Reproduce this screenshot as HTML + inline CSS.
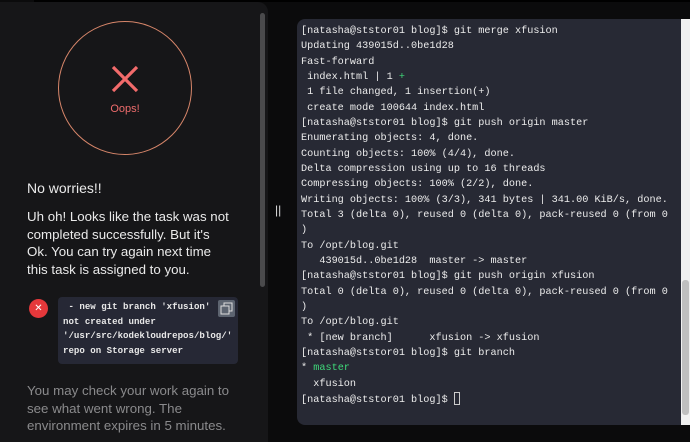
<!DOCTYPE html>
<html><head><meta charset="utf-8"><style>
*{margin:0;padding:0;box-sizing:border-box}
body{width:690px;height:434px;background:#0b0b0c;position:relative;overflow:hidden;font-family:"Liberation Sans",sans-serif}
#left{position:absolute;left:0;top:2px;width:268px;height:440px;background:#161618;border-radius:0 10px 0 0}
#topbar{position:absolute;left:34px;top:0;width:656px;height:2px;background:#000}
#sb{position:absolute;left:260px;top:13px;width:5px;height:274px;background:#4a4a4c;border-radius:3px}
#circle{position:absolute;left:58px;top:21px;width:134px;height:134px;border-radius:50%;border:1.3px solid #d7866a}
#oops{position:absolute;left:0;width:250px;text-align:center;top:103px;color:#ee6c6c;font-size:11px}
.t{position:absolute;left:27px;color:#eaeaea}
#nw{top:180px;font-size:14px}
#p1{top:208px;font-size:13.3px;line-height:17.7px;width:205px}
#p2{top:382px;font-size:13.3px;line-height:17.7px;color:#8a8a8c;width:212px}
#rc{position:absolute;left:29px;top:299px;width:19px;height:19px;border-radius:50%;background:#e5383b;color:#fff;font-size:10px;text-align:center;line-height:19px}
#code{position:absolute;left:58px;top:297px;width:180px;height:67px;background:#262835;border-radius:4px;color:#e8e8e8;font:bold 9.1px/14.5px "Liberation Mono",monospace;padding:3px 0 0 5px;white-space:pre}
#copy{position:absolute;left:218px;top:300px;width:17px;height:17px;background:#5d6470;border-radius:2px}
#div{position:absolute;left:275px;top:203px;color:#ddd;font-size:12px}
#term{position:absolute;left:297px;top:19px;width:400px;height:406px;background:#272934;border-radius:8px}
#tt{position:absolute;left:301px;top:24px;color:#ececec;font:10.2px/15.33px "Liberation Mono",monospace;white-space:pre}
.g{color:#3fd97a}
#tsb{position:absolute;left:681px;top:19px;width:9px;height:406px;background:#f0f0f0}
#th{position:absolute;left:682px;top:280px;width:7px;height:135px;background:#bfbfbf;border-radius:3px}
#cur{display:inline-block;width:6px;height:13px;border:1px solid #ccc;vertical-align:-3px}
</style></head><body>
<div id="topbar"></div>
<div id="left"></div>
<div id="sb"></div>
<div id="circle"></div>
<svg style="left:111px;top:65px;position:absolute" width="28" height="28"><path d="M2 2L26 26M26 2L2 26" stroke="#f26b6b" stroke-width="3.2"/></svg>
<div id="oops">Oops!</div>
<div class="t" id="nw">No worries!!</div>
<div class="t" id="p1">Uh oh! Looks like the task was not completed successfully. But it's Ok. You can try again next time this task is assigned to you.</div>
<div id="rc">✕</div>
<div id="code"> - new git branch 'xfusion'
not created under
'/usr/src/kodekloudrepos/blog/'
repo on Storage server</div>
<div id="copy"><svg width="17" height="17"><rect x="6" y="3" width="8" height="8" fill="none" stroke="#ddd"/><rect x="3" y="6" width="8" height="8" fill="#5d6470" stroke="#ddd"/></svg></div>
<div class="t" id="p2">You may check your work again to see what went wrong. The environment expires in 5 minutes.</div>
<div id="div">||</div>
<div id="term"></div>
<div id="tsb"></div><div id="th"></div>
<div id="tt">[natasha@ststor01 blog]$ git merge xfusion
Updating 439015d..0be1d28
Fast-forward
 index.html | 1 <span class="g">+</span>
 1 file changed, 1 insertion(+)
 create mode 100644 index.html
[natasha@ststor01 blog]$ git push origin master
Enumerating objects: 4, done.
Counting objects: 100% (4/4), done.
Delta compression using up to 16 threads
Compressing objects: 100% (2/2), done.
Writing objects: 100% (3/3), 341 bytes | 341.00 KiB/s, done.
Total 3 (delta 0), reused 0 (delta 0), pack-reused 0 (from 0
)
To /opt/blog.git
   439015d..0be1d28  master -> master
[natasha@ststor01 blog]$ git push origin xfusion
Total 0 (delta 0), reused 0 (delta 0), pack-reused 0 (from 0
)
To /opt/blog.git
 * [new branch]      xfusion -> xfusion
[natasha@ststor01 blog]$ git branch
* <span class="g">master</span>
  xfusion
[natasha@ststor01 blog]$ <span id="cur"></span></div>
</body></html>
